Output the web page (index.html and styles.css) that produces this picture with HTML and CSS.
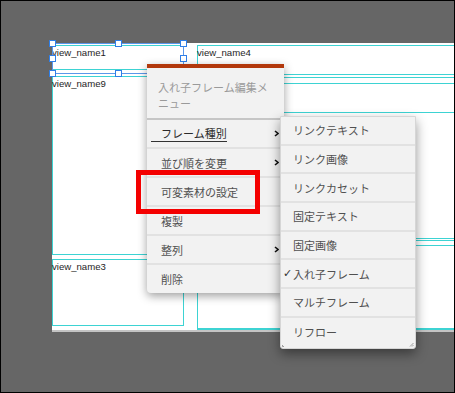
FILE: index.html
```html
<!DOCTYPE html>
<html lang="ja">
<head>
<meta charset="utf-8">
<title>入れ子フレーム編集メニュー</title>
<link rel="stylesheet" href="styles.css">
</head>
<body>
<div class="screen">
  <div class="canvas">
    <div class="frame f-name1"><span class="fname">view_name1</span></div>
    <div class="frame f-name9"><span class="fname">view_name9</span></div>
    <div class="frame f-name3"><span class="fname">view_name3</span></div>
    <div class="frame f-name4"><span class="fname">view_name4</span></div>
    <div class="frame f-b"></div>
    <div class="frame f-c"></div>
    <div class="frame f-d"></div>
    <div class="frame f-e"></div>
    <div class="selection">
      <i class="handle h-tl"></i><i class="handle h-tm"></i><i class="handle h-tr"></i>
      <i class="handle h-ml"></i><i class="handle h-mr"></i>
      <i class="handle h-bl"></i><i class="handle h-bm"></i>
    </div>
  </div>

  <div class="menu">
    <div class="menu-title">入れ子フレーム編集メニュー</div>
    <ul class="menu-list">
      <li class="menu-item is-open"><span class="label">フレーム種別</span><svg class="chev" width="5" height="7" viewBox="0 0 5 7"><polyline points="1,1 4,3.5 1,6" /></svg></li>
      <li class="menu-item"><span class="label">並び順を変更</span><svg class="chev" width="5" height="7" viewBox="0 0 5 7"><polyline points="1,1 4,3.5 1,6" /></svg></li>
      <li class="menu-item"><span class="label">可変素材の設定</span></li>
      <li class="menu-item"><span class="label">複製</span></li>
      <li class="menu-item"><span class="label">整列</span><svg class="chev" width="5" height="7" viewBox="0 0 5 7"><polyline points="1,1 4,3.5 1,6" /></svg></li>
      <li class="menu-item"><span class="label">削除</span></li>
    </ul>
  </div>

  <div class="submenu">
    <ul class="sub-list">
      <li class="sub-item">リンクテキスト</li>
      <li class="sub-item">リンク画像</li>
      <li class="sub-item">リンクカセット</li>
      <li class="sub-item">固定テキスト</li>
      <li class="sub-item">固定画像</li>
      <li class="sub-item checked"><span class="check">✓</span>入れ子フレーム</li>
      <li class="sub-item">マルチフレーム</li>
      <li class="sub-item">リフロー</li>
    </ul>
    <svg class="grip grip-r" width="5" height="5" viewBox="0 0 5 5"><path d="M4.5 1 L1 4.5 M4.5 3 L3 4.5"/></svg>
    <svg class="grip grip-l" width="3" height="3" viewBox="0 0 3 3"><path d="M0.5 1 L0.5 2.5 L2 2.5"/></svg>
  </div>

  <div class="callout"></div>
</div>
</body>
</html>
```

FILE: styles.css
```css
* { box-sizing: border-box; }

html, body {
  margin: 0;
  padding: 0;
  background: #666;
}

.screen {
  position: relative;
  width: 455px;
  height: 393px;
  border: 1px solid #000;
  background: #666;
  padding: 42px 0 0 51px;
  overflow: hidden;
  font-family: "Noto Sans CJK JP", "Noto Sans", sans-serif;
}

.canvas {
  position: relative;
  height: 289px;
  background: #fff;
  border-bottom: 2px solid #c4c4c4;
}

/* frames on the free canvas */
.frame {
  position: absolute;
  border: 1px solid #3dd3d3;
}
.fname {
  display: block;
  padding: 1px 0 0 0;
  margin-left: -1px;
  font-family: "Liberation Sans", Arial, sans-serif;
  font-size: 9.6px;
  line-height: 11px;
  color: #1e1e1e;
}
.f-name1 { left: 0; top: 2px; width: 132px; height: 25px; }
.f-name9 { left: 0; top: 33px; width: 132px; height: 179px; }
.f-name3 { left: 0; top: 216px; width: 132px; height: 67px; }
.f-name4 { left: 145px; top: 2px; width: 264px; height: 30px; }
.f-b { left: 145px; top: 34px; width: 264px; height: 36px; }
.f-c { left: 145px; top: 40px; width: 264px; height: 156px; }
.f-d { left: 145px; top: 197px; width: 264px; height: 90px; }
.f-e { left: 145px; top: 202px; width: 264px; height: 84px; }

/* selection */
.selection {
  position: absolute;
  left: 0;
  top: 0;
  width: 132px;
  height: 31px;
  border: 1px solid #5b97ea;
}
.handle {
  position: absolute;
  width: 7px;
  height: 7px;
  background: #fff;
  border: 1.3px solid #2f7fe8;
}
.h-tl { left: -4px; top: -4px; }
.h-tm { left: 62px; top: -4px; }
.h-tr { left: 127px; top: -4px; }
.h-ml { left: -4px; top: 11px; }
.h-mr { left: 127px; top: 11px; }
.h-bl { left: -4px; top: 26px; }
.h-bm { left: 62px; top: 26px; }

/* context menu */
.menu {
  position: absolute;
  left: 146px;
  top: 63px;
  width: 137px;
  height: 229px;
  background: #f2f2f2;
  border-top: 4px solid #b2380c;
  border-radius: 0 0 4px 4px;
  box-shadow: 0 3px 10px rgba(0, 0, 0, 0.38);
}
.menu-title {
  padding: 11px 16px 7px 11px;
  height: 52px;
  font-size: 11px;
  line-height: 16px;
  color: #9a9a9a;
  border-bottom: 2px solid #c6c6c6;
}
.menu-list,
.sub-list {
  list-style: none;
  margin: 0;
  padding: 0;
}
.menu-item {
  display: flex;
  align-items: center;
  justify-content: space-between;
  height: 29px;
  padding: 0 5px 0 14px;
  font-size: 11px;
  color: #505050;
  border-bottom: 2px solid #e2e2e2;
}
.menu-item:last-child { border-bottom: none; height: 27px; }
.menu-item.is-open .label {
  color: #2a2a2a;
  padding-left: 10px;
  margin-left: -10px;
  padding-bottom: 1px;
  border-bottom: 1px solid #333;
  line-height: 14px;
}
.chev {
  fill: none;
  stroke: #111;
  stroke-width: 1.6;
}

/* submenu */
.submenu {
  position: absolute;
  left: 279px;
  top: 115px;
  width: 136px;
  height: 233px;
  background: #f2f2f2;
  border: 1px solid #d6d6d6;
  border-radius: 0 0 3px 3px;
  box-shadow: 0 5px 12px rgba(0, 0, 0, 0.42);
}
.sub-item {
  display: flex;
  align-items: center;
  height: 28.7px;
  padding-left: 12px;
  font-size: 11px;
  color: #505050;
  border-bottom: 2px solid #e2e2e2;
}
.sub-item:last-child { border-bottom: none; }
.check {
  width: 9px;
  margin-left: -10px;
  margin-right: 1px;
  font-family: "DejaVu Sans", sans-serif;
  font-size: 11px;
  color: #333;
}
.grip {
  position: absolute;
  bottom: 1px;
  fill: none;
  stroke: #888;
  stroke-width: 0.8;
}
.grip-r { right: 1px; }
.grip-l { left: 1px; }

/* red callout */
.callout {
  position: absolute;
  left: 135px;
  top: 169px;
  width: 124px;
  height: 44px;
  border: 5px solid #f40000;
}
```
